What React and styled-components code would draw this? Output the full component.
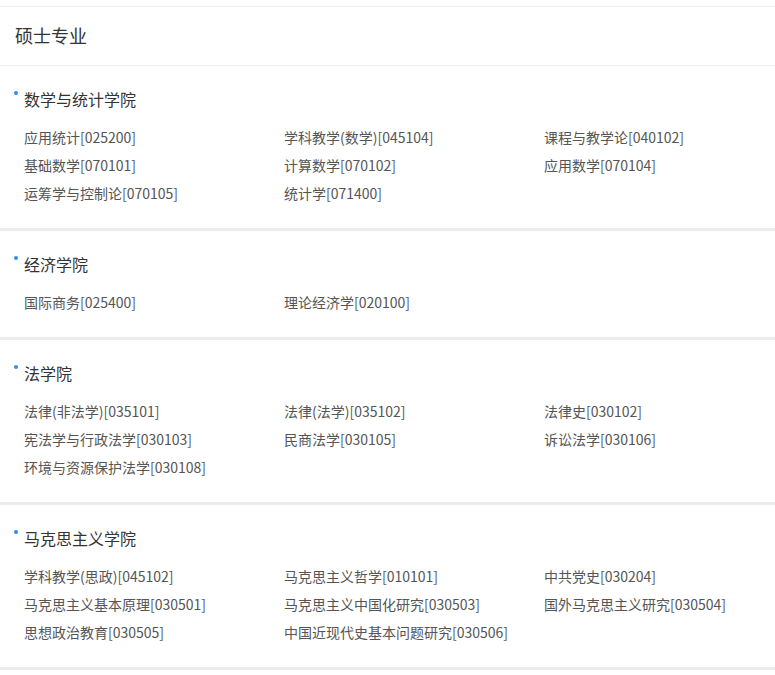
import React from "react";
import styled, { createGlobalStyle } from "styled-components";

const Global = createGlobalStyle`
  html, body { margin: 0; padding: 0; background: #fff; }
  body { font-family: "Noto Sans CJK SC", "Noto Sans", sans-serif; }
  * { box-sizing: border-box; }
`;

const Page = styled.div`
  padding-top: 6px;
  width: 775px;
`;

const Header = styled.div`
  height: 60px;
  border-top: 1px solid #eeeeee;
  border-bottom: 1px solid #eeeeee;
  display: flex;
  align-items: center;
  padding-left: 15px;
  padding-bottom: 2px;
  font-size: 18px;
  color: #333;
`;

const Section = styled.section`
  padding: 22px 0 21px 24px;
  border-bottom: 3px solid #ececec;
`;

const Title = styled.h3`
  position: relative;
  margin: 0;
  font-size: 16px;
  font-weight: normal;
  line-height: 22px;
  color: #333;
  &::before {
    content: "";
    position: absolute;
    left: -10px;
    top: 3px;
    width: 4px;
    height: 4px;
    border-radius: 50%;
    background: #2f8ff0;
  }
`;

const Grid = styled.div`
  display: grid;
  grid-template-columns: repeat(3, 260px);
  margin-top: 13px;
`;

const Item = styled.div`
  font-size: 14px;
  line-height: 28px;
  color: #555;
  white-space: nowrap;
`;

const data = [
  {
    name: "数学与统计学院",
    items: [
      "应用统计[025200]",
      "学科教学(数学)[045104]",
      "课程与教学论[040102]",
      "基础数学[070101]",
      "计算数学[070102]",
      "应用数学[070104]",
      "运筹学与控制论[070105]",
      "统计学[071400]",
    ],
  },
  {
    name: "经济学院",
    items: ["国际商务[025400]", "理论经济学[020100]"],
  },
  {
    name: "法学院",
    items: [
      "法律(非法学)[035101]",
      "法律(法学)[035102]",
      "法律史[030102]",
      "宪法学与行政法学[030103]",
      "民商法学[030105]",
      "诉讼法学[030106]",
      "环境与资源保护法学[030108]",
    ],
  },
  {
    name: "马克思主义学院",
    items: [
      "学科教学(思政)[045102]",
      "马克思主义哲学[010101]",
      "中共党史[030204]",
      "马克思主义基本原理[030501]",
      "马克思主义中国化研究[030503]",
      "国外马克思主义研究[030504]",
      "思想政治教育[030505]",
      "中国近现代史基本问题研究[030506]",
    ],
  },
];

export default function App() {
  return (
    <Page>
      <Global />
      <Header>硕士专业</Header>
      {data.map((s) => (
        <Section key={s.name}>
          <Title>{s.name}</Title>
          <Grid>
            {s.items.map((it) => (
              <Item key={it}>{it}</Item>
            ))}
          </Grid>
        </Section>
      ))}
    </Page>
  );
}
